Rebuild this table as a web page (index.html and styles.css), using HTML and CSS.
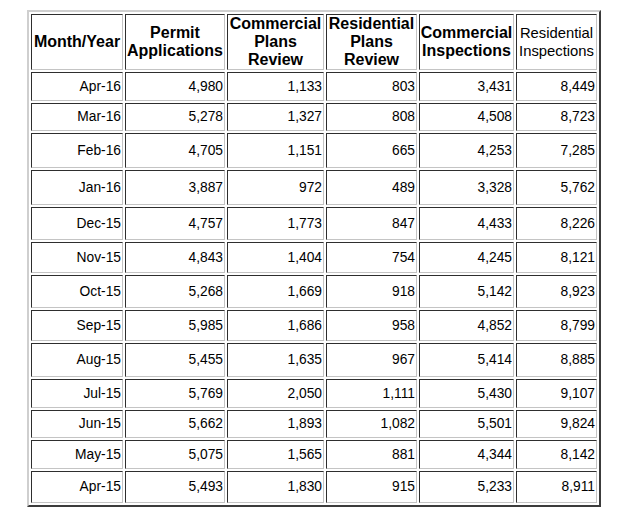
FILE: index.html
```html
<!DOCTYPE html>
<html>
<head>
<meta charset="utf-8">
<link rel="stylesheet" href="styles.css">
</head>
<body>
<div class="page">
<table class="stats">
  <colgroup>
    <col class="c1"><col class="c2"><col class="c3"><col class="c4"><col class="c5"><col class="c6">
  </colgroup>
  <thead>
    <tr class="h56">
      <th>Month/Year</th>
      <th>Permit Applications</th>
      <th>Commercial Plans Review</th>
      <th>Residential Plans Review</th>
      <th>Commercial Inspections</th>
      <th class="plain">Residential Inspections</th>
    </tr>
  </thead>
  <tbody>
    <tr class="h29"><td>Apr-16</td><td>4,980</td><td>1,133</td><td>803</td><td>3,431</td><td>8,449</td></tr>
    <tr class="h28"><td>Mar-16</td><td>5,278</td><td>1,327</td><td>808</td><td>4,508</td><td>8,723</td></tr>
    <tr class="h35"><td>Feb-16</td><td>4,705</td><td>1,151</td><td>665</td><td>4,253</td><td>7,285</td></tr>
    <tr class="h35"><td>Jan-16</td><td>3,887</td><td>972</td><td>489</td><td>3,328</td><td>5,762</td></tr>
    <tr class="h33"><td>Dec-15</td><td>4,757</td><td>1,773</td><td>847</td><td>4,433</td><td>8,226</td></tr>
    <tr class="h31"><td>Nov-15</td><td>4,843</td><td>1,404</td><td>754</td><td>4,245</td><td>8,121</td></tr>
    <tr class="h33"><td>Oct-15</td><td>5,268</td><td>1,669</td><td>918</td><td>5,142</td><td>8,923</td></tr>
    <tr class="h31"><td>Sep-15</td><td>5,985</td><td>1,686</td><td>958</td><td>4,852</td><td>8,799</td></tr>
    <tr class="h34"><td>Aug-15</td><td>5,455</td><td>1,635</td><td>967</td><td>5,414</td><td>8,885</td></tr>
    <tr class="h29"><td>Jul-15</td><td>5,769</td><td>2,050</td><td>1,111</td><td>5,430</td><td>9,107</td></tr>
    <tr class="h28"><td>Jun-15</td><td>5,662</td><td>1,893</td><td>1,082</td><td>5,501</td><td>9,824</td></tr>
    <tr class="h29"><td>May-15</td><td>5,075</td><td>1,565</td><td>881</td><td>4,344</td><td>8,142</td></tr>
    <tr class="h32"><td>Apr-15</td><td>5,493</td><td>1,830</td><td>915</td><td>5,233</td><td>8,911</td></tr>
  </tbody>
</table>
</div>
</body>
</html>
```

FILE: styles.css
```css
html, body {
  margin: 0;
  padding: 0;
  background: #ffffff;
}

.page {
  padding: 10px 0 0 27px;
}

.stats {
  table-layout: fixed;
  width: 574px;
  border-collapse: separate;
  border-spacing: 2px;
  border-style: solid;
  border-width: 2px;
  border-color: #cfcfcf #3c3c3c #3c3c3c #cfcfcf;
  font-family: "Liberation Sans", Arial, sans-serif;
  color: #000;
}

.c1 { width: 92px; }
.c2 { width: 100px; }
.c3 { width: 97px; }
.c4 { width: 91px; }
.c5 { width: 95px; }
.c6 { width: 81px; }

.stats th,
.stats td {
  border-style: solid;
  border-width: 1px;
  border-color: #2e2e2e #c4c4c4 #c4c4c4 #2e2e2e;
  vertical-align: middle;
}

.stats th {
  font-size: 16px;
  font-weight: bold;
  line-height: 18px;
  text-align: center;
  padding: 0;
}

.stats th.plain {
  font-weight: normal;
  font-size: 14.8px;
}

.stats td {
  font-size: 13.8px;
  text-align: right;
  padding: 0 1px;
  line-height: 16px;
}

.h28 { height: 28px; }
.h29 { height: 29px; }
.h31 { height: 31px; }
.h32 { height: 32px; }
.h33 { height: 33px; }
.h34 { height: 34px; }
.h35 { height: 35px; }
.h56 { height: 56px; }
```
